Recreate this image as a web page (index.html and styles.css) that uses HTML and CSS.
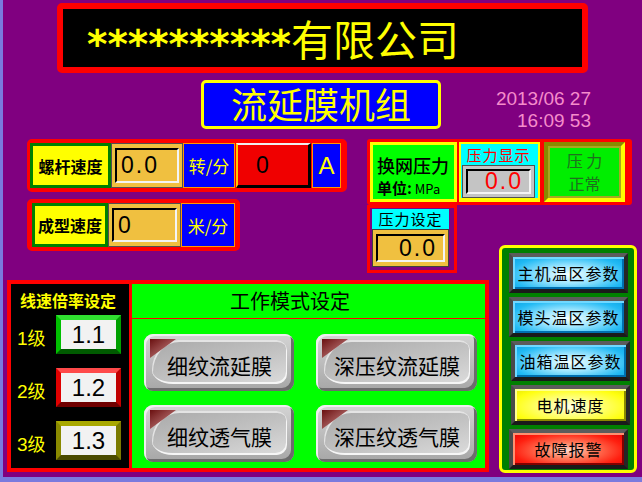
FILE: index.html
```html
<!DOCTYPE html>
<html lang="zh-CN">
<head>
  <meta charset="UTF-8" />
  <title>流延膜机组</title>
  <link rel="stylesheet" href="styles.css">
</head>
<body>
<div class="screen">
  <div class="banner"><span class="stars">**********</span>有限公司</div>

  <div class="title-row">
    <div class="machine-title">流延膜机组</div>
    <div class="clock">
      <div>2013/06 27</div>
      <div>16:09 53</div>
    </div>
  </div>

  <div class="mid-row">
    <div class="speeds">
      <div class="speed-group">
        <div class="speed-label">螺杆速度</div>
        <div class="field field-tan w72"><div class="field-in">0.0</div></div>
        <div class="unit w52">转/分</div>
        <div class="amp">0</div>
        <div class="unit unit-a">A</div>
      </div>
      <div class="speed-group second">
        <div class="speed-label short">成型速度</div>
        <div class="field field-tan w73"><div class="field-in">0</div></div>
        <div class="unit w54">米/分</div>
      </div>
    </div>

    <div class="pressure">
      <div class="press-top">
        <div class="press-name">
          <div class="press-title">换网压力</div>
          <div class="press-unit"><b>单位:</b> MPa</div>
        </div>
        <div class="press-show">
          <div class="cap cap-red">压力显示</div>
          <div class="field field-gray"><div class="field-in red-num">0.0</div></div>
        </div>
        <div class="press-ok">
          <div class="ok-line">压 力</div>
          <div class="ok-line">正常</div>
        </div>
      </div>
      <div class="press-set">
        <div class="cap">压力设定</div>
        <div class="field field-tan"><div class="field-in num-right">0.0</div></div>
      </div>
    </div>
  </div>

  <div class="low-row">
    <div class="mode-frame">
      <div class="ratio">
        <div class="ratio-title">线速倍率设定</div>
        <div class="ratio-item">
          <span class="ratio-name"><span class="digit">1</span>级</span>
          <div class="ratio-box green"><div class="ratio-val">1.1</div></div>
        </div>
        <div class="ratio-item">
          <span class="ratio-name"><span class="digit">2</span>级</span>
          <div class="ratio-box red"><div class="ratio-val">1.2</div></div>
        </div>
        <div class="ratio-item">
          <span class="ratio-name"><span class="digit">3</span>级</span>
          <div class="ratio-box olive"><div class="ratio-val">1.3</div></div>
        </div>
      </div>
      <div class="modes">
        <div class="modes-head">工作模式设定</div>
        <div class="mode-grid">
          <div class="mode-btn">
            <svg class="corner" width="26" height="19" viewBox="0 0 26 19"><defs><linearGradient id="tri1" x1="0" y1="0" x2="1" y2="1"><stop offset="0" stop-color="#6a1010"/><stop offset="1" stop-color="#d09090"/></linearGradient></defs><polygon points="0,0 26,0 0,19" fill="url(#tri1)"/></svg>
            <div class="mode-face">细纹流延膜</div>
          </div>
          <div class="mode-btn">
            <svg class="corner" width="26" height="19" viewBox="0 0 26 19"><polygon points="0,0 26,0 0,19" fill="url(#tri1)"/></svg>
            <div class="mode-face">深压纹流延膜</div>
          </div>
          <div class="mode-btn">
            <svg class="corner" width="26" height="19" viewBox="0 0 26 19"><polygon points="0,0 26,0 0,19" fill="url(#tri1)"/></svg>
            <div class="mode-face">细纹透气膜</div>
          </div>
          <div class="mode-btn">
            <svg class="corner" width="26" height="19" viewBox="0 0 26 19"><polygon points="0,0 26,0 0,19" fill="url(#tri1)"/></svg>
            <div class="mode-face">深压纹透气膜</div>
          </div>
        </div>
      </div>
    </div>

    <div class="nav">
      <div class="nav-btn cyan">主机温区参数</div>
      <div class="nav-btn cyan">模头温区参数</div>
      <div class="nav-btn cyan shift">油箱温区参数</div>
      <div class="nav-btn yellow shift">电机速度</div>
      <div class="nav-btn redbtn">故障报警</div>
    </div>
  </div>
</div>
</body>
</html>
```

FILE: styles.css
```css
* {
  box-sizing: border-box;
}
body {
  margin: 0;
  font-family: "Noto Sans CJK SC", "Liberation Sans", sans-serif;
}
.screen {
  width: 642px;
  height: 482px;
  overflow: hidden;
  background:
    linear-gradient(#7a7ade, #7a7ade) left top / 3px 100% no-repeat,
    linear-gradient(#7a7ade, #7a7ade) left bottom / 100% 5px no-repeat,
    #800080;
  padding-top: 3px;
}

/* header */
.banner {
  margin-left: 57px;
  width: 531px;
  height: 70px;
  border: 6px solid #ff0000;
  border-radius: 5px;
  background: #000;
  color: #ffff00;
  font-size: 42px;
  line-height: 1;
  padding-left: 24px;
  display: flex;
  align-items: center;
}
.stars {
  font-family: "DejaVu Sans", sans-serif;
  font-weight: bold;
  font-size: 39px;
  position: relative;
  top: 6px;
}
.title-row {
  display: flex;
  margin-top: 7px;
  height: 49px;
}
.machine-title {
  margin-left: 201px;
  width: 240px;
  height: 49px;
  border: 3px solid #ffff00;
  border-radius: 5px;
  background: #0000ff;
  color: #ffff00;
  font-size: 36px;
  line-height: 41px;
  text-align: center;
}
.clock {
  margin-left: 50px;
  width: 100px;
  padding-top: 8px;
  font-family: "Liberation Sans", sans-serif;
  font-size: 19px;
  line-height: 22px;
  color: #f58ccb;
  text-align: right;
}

/* speed rows */
.mid-row {
  display: flex;
  margin-top: 10px;
  height: 134px;
}
.speeds {
  margin-left: 27px;
  width: 320px;
}
.speed-group {
  display: flex;
  width: 320px;
  height: 53px;
  border: 3px solid #ff0000;
  border-radius: 5px;
  background: #ff0000;
  padding: 1px 0;
}
.speed-group.second {
  width: 213px;
  height: 52px;
  margin-top: 7px;
  padding-left: 2px;
}
.speed-label {
  width: 81px;
  border: 3px solid #008000;
  background: #ffff00;
  font-size: 16px;
  font-weight: bold;
  display: flex;
  align-items: center;
  justify-content: center;
}
.speed-label.short {
  width: 76px;
}
.field {
  border: 1px solid #505050;
  padding: 4px 3px;
}
.field-tan {
  background: #f0c040;
}
.field-gray {
  background: #c4c4c4;
}
.w72 { width: 72px; }
.w73 { width: 73px; }
.w52 { width: 52px; }
.w54 { width: 54px; }
.field-in {
  height: 100%;
  border-top: 2px solid #000;
  border-left: 2px solid #000;
  border-right: 2px solid #f4f4f4;
  border-bottom: 2px solid #f4f4f4;
  font-family: "Liberation Sans", sans-serif;
  font-size: 23px;
  letter-spacing: 2px;
  display: flex;
  align-items: center;
  padding-left: 4px;
}
.unit {
  background: #0000ff;
  border: 1px solid #ff9900;
  color: #ffff00;
  font-size: 17px;
  display: flex;
  align-items: center;
  justify-content: center;
}
.unit-a {
  width: 29px;
  margin-left: 1px;
  font-family: "Liberation Sans", sans-serif;
  font-size: 24px;
}
.amp {
  width: 75px;
  margin-left: 1px;
  background: #f00000;
  border-top: 2px solid #eeeeee;
  border-left: 2px solid #ffcc00;
  border-right: 3px solid #000;
  border-bottom: 3px solid #000;
  font-family: "Liberation Sans", sans-serif;
  font-size: 23px;
  padding-left: 18px;
  display: flex;
  align-items: center;
}

/* pressure */
.pressure {
  margin-left: 20px;
}
.press-top {
  display: flex;
  width: 265px;
  height: 66px;
  border: 3px solid #ff0000;
  border-radius: 3px;
  background: #ff0000;
  padding-right: 4px;
}
.press-name {
  width: 87px;
  border: 3px solid #ffff00;
  background: #00ff00;
  padding: 8px 0 0 4px;
}
.press-title {
  font-size: 18px;
  line-height: 24px;
  font-weight: 500;
}
.press-unit {
  font-size: 13px;
  line-height: 18px;
  margin-top: 2px;
}
.press-unit b {
  font-size: 15px;
}
.press-show {
  width: 81px;
  margin-left: 2px;
  border: 2px solid #ffff00;
  border-bottom-width: 4px;
  background: #00ffff;
  padding: 0 3px 0 1px;
}
.cap {
  height: 21px;
  font-size: 15px;
  line-height: 21px;
  text-align: center;
  letter-spacing: 1px;
}
.cap-red {
  color: #ff0000;
}
.field-gray {
  height: 33px;
  padding: 3px 3px;
}
.red-num {
  color: #ff0000;
  justify-content: flex-end;
  padding-right: 6px;
}
.num-right {
  justify-content: flex-end;
  padding-right: 6px;
}
.press-ok {
  width: 81px;
  margin-left: 4px;
  border: 4px solid;
  border-color: #8a8a00 #ffff00 #ffff00 #8a8a00;
  box-shadow: inset 0 0 0 2px #a8a820;
  background: #00ee00;
  color: #1f6f1f;
  font-size: 16px;
  text-align: center;
  display: flex;
  flex-direction: column;
  align-items: center;
  justify-content: center;
}
.ok-line {
  line-height: 23.5px;
}
.press-set {
  width: 90px;
  height: 68px;
  border: 3px solid #ff0000;
  background: #800080;
  padding: 1px 5px 3px 2px;
}
.press-set .cap {
  background: #00ffff;
  height: 20px;
  line-height: 20px;
}
.press-set .field {
  height: 38px;
  border-color: #404040;
}

/* lower part */
.low-row {
  display: flex;
  margin-top: 7px;
}
.mode-frame {
  margin-left: 7px;
  width: 482px;
  height: 192px;
  border: 4px solid #ff0000;
  background: #ff0000;
  display: flex;
}
.ratio {
  width: 118px;
  background: #000;
  padding: 6px 0 0 6px;
}
.ratio-title {
  color: #ffff00;
  font-weight: bold;
  font-size: 16px;
  line-height: 20px;
  padding-left: 3px;
  margin-bottom: 5px;
}
.ratio-item {
  display: flex;
  align-items: center;
  height: 39px;
  margin-bottom: 14px;
}
.ratio-name {
  width: 39px;
  color: #ffff00;
  font-size: 18px;
  padding-top: 4px;
}
.digit {
  font-family: "Liberation Sans", sans-serif;
  font-size: 19px;
}
.ratio-box {
  width: 65px;
  height: 39px;
  border: 5px solid;
}
.ratio-box.green {
  border-color: #30e030 #00a000 #005a00 #00c000;
}
.ratio-box.red {
  border-color: #ff4a4a #c00000 #700000 #e00000;
}
.ratio-box.olive {
  border-color: #a8a800 #7a7a00 #4a4a00 #8a8a00;
}
.ratio-val {
  height: 100%;
  background: #f2f2f2;
  font-family: "Liberation Sans", sans-serif;
  font-size: 24px;
  text-align: center;
  line-height: 29px;
}
.modes {
  margin-left: 3px;
  flex: 1;
  background: #00ff00;
}
.modes-head {
  height: 35px;
  border-bottom: 1px solid #ff0000;
  font-size: 20px;
  line-height: 34px;
  padding-left: 98px;
}
.mode-grid {
  display: grid;
  grid-template-columns: 150px 161px;
  column-gap: 22px;
  row-gap: 14px;
  margin: 15px 0 0 12px;
}
.mode-btn {
  position: relative;
  height: 57px;
  border-radius: 9px;
  background: linear-gradient(#d4d4d4, #a6a6a6);
  box-shadow: inset 2px 2px 0 #efefef, inset -3px -3px 0 #6c6c6c;
  padding: 6px 7px 7px 8px;
  display: flex;
}
.mode-face {
  flex: 1;
  border-radius: 30px 12px 12px 24px / 34px 12px 12px 16px;
  background: linear-gradient(165deg, #a9a9a9 0%, #c2c2c2 55%, #dcdcdc 100%);
  box-shadow: inset 1px 2px 0 #e4e4e4, inset -1px -2px 0 #f6f6f6;
  font-size: 21px;
  display: flex;
  align-items: center;
  justify-content: center;
  padding-top: 6px;
}
.corner {
  position: absolute;
  left: 6px;
  top: 5px;
}

/* navigation */
.nav {
  margin: -35px 0 0 10px;
  width: 138px;
  height: 228px;
  border: 3px solid #ffff00;
  border-radius: 6px;
  background: #008000;
  padding: 5px 0 0 7px;
}
.nav-btn {
  width: 119px;
  height: 40px;
  margin-bottom: 4px;
  border: 4px solid;
  border-color: #5c5c5c #262626 #1a1a1a #4a4a4a;
  font-size: 16px;
  letter-spacing: 1px;
  display: flex;
  align-items: center;
  justify-content: center;
}
.nav-btn.shift {
  margin-left: 2px;
}
.nav-btn.cyan {
  background: radial-gradient(ellipse at 50% 55%, #f4ffff 0%, #9ee6ff 35%, #22baf4 75%, #0aa4e4 100%);
  box-shadow: inset 2px 2px 0 #70d8ff, inset -2px -2px 0 #0070b0;
}
.nav-btn.yellow {
  background: radial-gradient(ellipse at 50% 55%, #ffffe8 0%, #ffff80 35%, #ffff10 75%, #e8e800 100%);
  box-shadow: inset 2px 2px 0 #ffff90, inset -2px -2px 0 #8a8a00;
}
.nav-btn.redbtn {
  background: radial-gradient(ellipse at 50% 55%, #ffd8c8 0%, #ff8060 30%, #ff2010 70%, #e80000 100%);
  box-shadow: inset 2px 2px 0 #ff9070, inset -2px -2px 0 #800000;
}
```
